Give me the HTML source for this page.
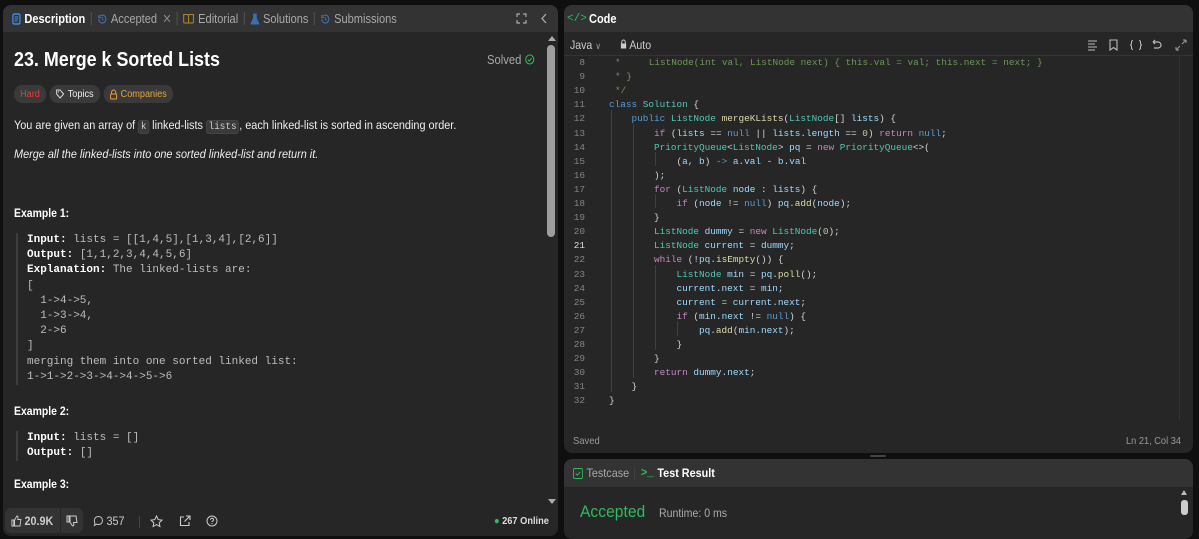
<!DOCTYPE html>
<html><head><meta charset="utf-8"><style>
*{box-sizing:border-box;margin:0;padding:0}
body{width:1199px;height:538px;background:#0f0f0f;overflow:hidden;font-family:"Liberation Sans",sans-serif;color:#eff1f6;position:relative}
.panel{position:absolute;background:#262626;border-radius:8px;overflow:hidden}
.hdr{position:absolute;left:0;right:0;top:0;height:27px;background:#333;display:flex;align-items:center;font-size:12.5px;color:#a8a8a8}
.sep{width:1px;height:13px;background:#555;margin:0 6px}
.tab{display:flex;align-items:center;gap:4px}
.mono{font-family:"Liberation Mono",monospace}
.ln{position:absolute;left:0;width:21px;text-align:right;color:#858585}
.cl{position:absolute;left:45px;white-space:pre;color:#d4d4d4}
.kw{color:#c586c0}.ty{color:#4ec9b0}.va{color:#9cdcfe}.nu{color:#569cd6}.fn{color:#dcdcaa}.cm{color:#6a9955}.num{color:#b5cea8}
.guide{position:absolute;width:1px;background:#404040}
.ex{position:absolute;left:16px;border-left:2px solid #3d3d3d;padding-left:9px;font-family:"Liberation Mono",monospace;font-size:11px;line-height:15.2px;color:#bdbdbd;white-space:pre}
.ex b{color:#fff}
.h4{position:absolute;left:14px;font-weight:bold;font-size:12px;color:#fff;transform:scaleX(.87);transform-origin:0 0}
.sx{transform-origin:0 0;white-space:nowrap}
</style></head><body>

<!-- LEFT PANEL -->
<div class="panel" style="left:3px;top:5px;width:555px;height:531px">
  <div class="hdr" style="padding-left:9px">
    <div class="sx" style="display:flex;align-items:center;transform:scaleX(.885)">
    <div class="tab" style="color:#fff;font-weight:bold"><svg width="10" height="12" viewBox="0 0 10 12"><rect x="1" y="1" width="8" height="10" rx="1.5" fill="none" stroke="#3b8df5" stroke-width="1.4"/><path d="M3 4h4M3 6h4M3 8h3" stroke="#3b8df5" stroke-width="1"/></svg>Description</div>
    <div class="sep"></div>
    <div class="tab"><svg width="12" height="12" viewBox="0 0 12 12"><path d="M2 6a4 4 0 1 0 1.2-2.8" fill="none" stroke="#3b6fb0" stroke-width="1.2"/><path d="M2 2v2.5h2.5" fill="none" stroke="#3b6fb0" stroke-width="1.2"/><path d="M6 4v2.2l1.5 1" stroke="#3b6fb0" stroke-width="1" fill="none"/></svg>Accepted <span style="margin-left:2px;color:#888">✕</span></div>
    <div class="sep"></div>
    <div class="tab"><svg width="13" height="11" viewBox="0 0 13 11"><path d="M1 1.5h4a1.5 1.5 0 0 1 1.5 1.5v7H2a1 1 0 0 1-1-1zM12 1.5H8A1.5 1.5 0 0 0 6.5 3v7H11a1 1 0 0 0 1-1z" fill="none" stroke="#b8862b" stroke-width="1.1"/></svg>Editorial</div>
    <div class="sep"></div>
    <div class="tab"><svg width="11" height="12" viewBox="0 0 11 12"><path d="M3.5 1h4M4 1v4L1 11h9L7 5V1" fill="#3b6fb0" stroke="#3b6fb0" stroke-width="1"/></svg>Solutions</div>
    <div class="sep"></div>
    <div class="tab"><svg width="12" height="12" viewBox="0 0 12 12"><path d="M2 6a4 4 0 1 0 1.2-2.8" fill="none" stroke="#3b6fb0" stroke-width="1.2"/><path d="M2 2v2.5h2.5" fill="none" stroke="#3b6fb0" stroke-width="1.2"/><path d="M6 4v2.2l1.5 1" stroke="#3b6fb0" stroke-width="1" fill="none"/></svg>Submissions</div>
    </div>
    <svg style="position:absolute;left:513px;top:8px" width="11" height="11" viewBox="0 0 11 11"><path d="M1 4V1h3M7 1h3v3M10 7v3H7M4 10H1V7" fill="none" stroke="#aaa" stroke-width="1.2"/></svg>
    <svg style="position:absolute;left:537px;top:8px" width="8" height="11" viewBox="0 0 8 11"><path d="M6 1L2 5.5 6 10" fill="none" stroke="#aaa" stroke-width="1.3"/></svg>
  </div>
  <div class="sx" style="position:absolute;left:11px;top:44px;font-size:20px;font-weight:bold;color:#fff;transform:scaleX(.895)">23. Merge k Sorted Lists</div>
  <div class="sx" style="position:absolute;left:484px;top:48px;font-size:12.5px;color:#a8a8a8;transform:scaleX(.9)">Solved <svg width="11" height="11" viewBox="0 0 11 11" style="vertical-align:-1px"><circle cx="5.5" cy="5.5" r="4.5" fill="none" stroke="#2cbb5d" stroke-width="1.1"/><path d="M3.3 5.6l1.6 1.5 2.8-3" fill="none" stroke="#2cbb5d" stroke-width="1.1"/></svg></div>
  <div class="sx" style="position:absolute;left:11px;top:80px;display:flex;gap:4px;font-size:10.5px;transform:scaleX(.87)">
    <div style="background:#3a3a3a;border-radius:9px;padding:3px 7px;color:#f63636">Hard</div>
    <div style="background:#3a3a3a;border-radius:9px;padding:3px 7px;color:#eee;display:flex;gap:4px;align-items:center"><svg width="10" height="10" viewBox="0 0 10 10"><path d="M1 1h4l4 4-4 4-4-4z" fill="none" stroke="#ddd" stroke-width="1.1"/><circle cx="3" cy="3" r=".7" fill="#ddd"/></svg>Topics</div>
    <div style="background:#3a3a3a;border-radius:9px;padding:3px 7px;color:#e6a33a;display:flex;gap:4px;align-items:center"><svg width="9" height="11" viewBox="0 0 9 11"><path d="M2 5V3.5a2.5 2.5 0 0 1 5 0V5" fill="none" stroke="#e6a33a" stroke-width="1.1"/><rect x="1" y="5" width="7" height="5" rx="1" fill="none" stroke="#e6a33a" stroke-width="1.1"/></svg>Companies</div>
  </div>
  <div class="sx" style="position:absolute;left:11px;top:113px;font-size:12.3px;color:#eee;transform:scaleX(.885)">You are given an array of <span class="mono" style="background:#3a3a3a;border:1px solid #444;border-radius:3px;padding:0 2px;font-size:10.5px;color:#ccc">k</span> linked-lists <span class="mono" style="background:#3a3a3a;border:1px solid #444;border-radius:3px;padding:0 2px;font-size:10.5px;color:#ccc">lists</span>, each linked-list is sorted in ascending order.</div>
  <div class="sx" style="position:absolute;left:11px;top:142px;font-size:12.3px;font-style:italic;color:#eee;transform:scaleX(.885)">Merge all the linked-lists into one sorted linked-list and return it.</div>
  <div class="h4" style="left:11px;top:201px">Example 1:</div>
  <div class="ex" style="left:13px;top:228px"><b>Input:</b> lists = [[1,4,5],[1,3,4],[2,6]]
<b>Output:</b> [1,1,2,3,4,4,5,6]
<b>Explanation:</b> The linked-lists are:
[
  1-&gt;4-&gt;5,
  1-&gt;3-&gt;4,
  2-&gt;6
]
merging them into one sorted linked list:
1-&gt;1-&gt;2-&gt;3-&gt;4-&gt;4-&gt;5-&gt;6</div>
  <div class="h4" style="left:11px;top:399px">Example 2:</div>
  <div class="ex" style="left:13px;top:426px"><b>Input:</b> lists = []
<b>Output:</b> []</div>
  <div class="h4" style="left:11px;top:472px">Example 3:</div>
  <div style="position:absolute;right:0;top:28px;width:13px;height:474px;background:#262626">
    <div style="position:absolute;left:3px;top:3px;width:0;height:0;border:4px solid transparent;border-bottom:5px solid #aaa;border-top:0"></div>
    <div style="position:absolute;left:2px;top:12px;width:8px;height:192px;background:#9e9e9e;border-radius:4px"></div>
    <div style="position:absolute;left:3px;bottom:3px;width:0;height:0;border:4px solid transparent;border-top:5px solid #aaa;border-bottom:0"></div>
  </div>
  <div style="position:absolute;left:0;right:0;bottom:0;height:30px;background:#262626;font-size:12px;color:#ccc">
    <div style="position:absolute;left:2px;top:2px;width:78px;height:25px;background:#333;border-radius:6px"></div>
    <div style="position:absolute;left:57px;top:2px;width:1px;height:25px;background:#262626"></div>
    <div class="sx" style="position:absolute;left:8px;top:8px;display:flex;align-items:center;gap:3px;font-weight:bold;transform:scaleX(.9)"><svg width="12" height="12" viewBox="0 0 12 12"><path d="M1 5h2v6H1zM4 5l2.5-4c1 0 1.5.7 1.3 1.8L7.5 4.5H11l-1 6.5H4z" fill="none" stroke="#ccc" stroke-width="1"/></svg>20.9K</div>
    <svg style="position:absolute;left:63px;top:9px" width="12" height="12" viewBox="0 0 12 12"><path d="M1 1h2v6H1zM4 7l2.5 4c1 0 1.5-.7 1.3-1.8L7.5 7.5H11L10 1H4z" fill="none" stroke="#ccc" stroke-width="1"/></svg>
    <div class="sx" style="position:absolute;left:90px;top:8px;display:flex;align-items:center;gap:3px;transform:scaleX(.9)"><svg width="12" height="12" viewBox="0 0 12 12"><path d="M6 1.5c2.8 0 4.5 1.8 4.5 4s-1.7 4-4.5 4c-.8 0-1.5-.1-2.1-.4L1.5 10.5l.7-2.2C1.7 7.6 1.5 6.7 1.5 5.5c0-2.2 1.7-4 4.5-4z" fill="none" stroke="#ccc" stroke-width="1"/></svg>357</div>
    <div style="position:absolute;left:136px;top:10px;width:1px;height:12px;background:#444"></div>
    <svg style="position:absolute;left:147px;top:9px" width="13" height="13" viewBox="0 0 13 13"><path d="M6.5 1l1.7 3.6 3.8.5-2.8 2.6.7 3.8-3.4-1.9-3.4 1.9.7-3.8L1 5.1l3.8-.5z" fill="none" stroke="#ccc" stroke-width="1"/></svg>
    <svg style="position:absolute;left:176px;top:9px" width="12" height="12" viewBox="0 0 12 12"><path d="M5 2H1.5v8.5H10V7M7 1h4v4M11 1L5.5 6.5" fill="none" stroke="#ccc" stroke-width="1.1"/></svg>
    <svg style="position:absolute;left:203px;top:9px" width="12" height="12" viewBox="0 0 12 12"><circle cx="6" cy="6" r="5" fill="none" stroke="#ccc" stroke-width="1"/><path d="M4.5 4.7a1.5 1.5 0 1 1 2 1.4c-.4.2-.5.5-.5.9" fill="none" stroke="#ccc" stroke-width="1"/><circle cx="6" cy="8.6" r=".6" fill="#ccc"/></svg>
    <div class="sx" style="position:absolute;left:491px;top:9px;font-size:10.5px;color:#ddd;font-weight:bold;transform:scaleX(.88)"><span style="color:#2cbb5d">●</span> 267 Online</div>
  </div>
</div>

<!-- CODE PANEL -->
<div class="panel" style="left:564px;top:5px;width:629px;height:448px">
  <div class="hdr" style="padding-left:3px;font-weight:bold;color:#fff"><span style="color:#2cbb5d;font-weight:normal;margin-right:2px;font-size:11px" class="mono">&lt;/&gt;</span><span class="sx" style="display:inline-block;transform:scaleX(.88)">Code</span></div>
  <div style="position:absolute;left:0;right:0;top:28px;height:23px;border-bottom:1px solid #333;font-size:12px;color:#ccc">
    <div class="sx" style="position:absolute;left:6px;top:5px;transform:scaleX(.88)">Java <span style="font-size:9px;color:#999">∨</span></div>
    <div class="sx" style="position:absolute;left:56px;top:5px;transform:scaleX(.88)"><svg width="8" height="10" viewBox="0 0 8 10"><path d="M2 4.5V3a2 2 0 0 1 4 0v1.5" fill="none" stroke="#ccc" stroke-width="1.1"/><rect x="1" y="4.5" width="6" height="5" fill="#ccc"/></svg> Auto</div>
    <svg style="position:absolute;left:523px;top:6px" width="104" height="12" viewBox="0 0 104 12">
      <path d="M1 2h9M1 5h7M1 8h9M1 11h7" stroke="#bbb" stroke-width="1.1"/>
      <path d="M23 1h7v10l-3.5-2.5L23 11z" fill="none" stroke="#bbb" stroke-width="1.1"/>
      <path d="M46 1.5c-1.5 0-1.5 1-1.5 2.5s-1 2-1.5 2c.5 0 1.5.5 1.5 2s0 2.5 1.5 2.5M52 1.5c1.5 0 1.5 1 1.5 2.5s1 2 1.5 2c-.5 0-1.5.5-1.5 2s0 2.5-1.5 2.5" fill="none" stroke="#bbb" stroke-width="1.1"/>
      <path d="M66 3h5a3 3 0 0 1 0 6h-4M66 3l2-2M66 3l2 2" fill="none" stroke="#bbb" stroke-width="1.2"/>
      <path d="M89 11l4-4M89 11V8M89 11h3M99 1l-4 4M99 1v3M99 1h-3" fill="none" stroke="#999" stroke-width="1"/>
    </svg>
  </div>
  <div class="mono" style="position:absolute;left:0;top:51px;width:617px;height:365px;font-size:9.4px">
    <div style="position:absolute;right:1px;top:0;width:1px;height:365px;background:#333"></div>
    <div class="guide" style="left:47px;top:54px;height:282px"></div>
    <div class="guide" style="left:69px;top:68px;height:254px"></div>
    <div class="guide" style="left:91px;top:96px;height:14px"></div>
    <div class="guide" style="left:91px;top:138px;height:14px"></div>
    <div class="guide" style="left:91px;top:209px;height:85px"></div>
    <div class="guide" style="left:113px;top:265px;height:15px"></div>
    <div id="code"></div>
  </div>
  <div class="sx" style="position:absolute;left:9px;top:430px;font-size:10.5px;color:#999;transform:scaleX(.9)">Saved</div>
  <div class="sx" style="position:absolute;left:562px;top:430px;font-size:10.5px;color:#999;transform:scaleX(.88)">Ln 21, Col 34</div>
</div>
<div style="position:absolute;left:870px;top:455px;width:16px;height:2px;background:#444;border-radius:1px"></div>

<!-- TEST PANEL -->
<div class="panel" style="left:564px;top:459px;width:629px;height:80px">
  <div class="hdr" style="height:28px;padding-left:9px;font-size:12px">
    <div class="sx" style="display:flex;align-items:center;transform:scaleX(.9)">
    <svg width="11" height="11" viewBox="0 0 11 11"><rect x=".5" y=".5" width="10" height="10" rx="1.5" fill="none" stroke="#2cbb5d" stroke-width="1"/><path d="M3 5.5l1.8 1.7L8 4" fill="none" stroke="#2cbb5d" stroke-width="1"/></svg>
    <span style="margin-left:4px">Testcase</span><div class="sep" style="background:#444"></div>
    <span style="color:#2cbb5d;font-family:'Liberation Mono',monospace;font-size:12px;font-weight:bold">&gt;_</span>
    <span style="margin-left:4px;color:#fff;font-weight:bold">Test Result</span>
    </div>
  </div>
  <div class="sx" style="position:absolute;left:16px;top:43px;font-size:17px;color:#2cbb5d;transform:scaleX(.92)">Accepted</div>
  <div class="sx" style="position:absolute;left:95px;top:47px;font-size:12px;color:#aaa;transform:scaleX(.88)">Runtime: 0 ms</div>
  <div style="position:absolute;right:5px;top:31px;width:7px;height:46px">
    <div style="width:0;height:0;border:3.5px solid transparent;border-bottom:5px solid #bbb;border-top:0"></div>
    <div style="margin-top:5px;width:7px;height:15px;background:#ccc;border-radius:3px"></div>
  </div>
</div>

<script>
const lines=[
[8,'<span class="cm">*     ListNode(int val, ListNode next) { this.val = val; this.next = next; }</span>',1],
[9,'<span class="cm">* }</span>',1],
[10,'<span class="cm">*/</span>',1],
[11,'<span class="nu">class</span> <span class="ty">Solution</span> {',0],
[12,'    <span class="nu">public</span> <span class="ty">ListNode</span> <span class="fn">mergeKLists</span>(<span class="ty">ListNode</span>[] <span class="va">lists</span>) {',0],
[13,'        <span class="kw">if</span> (<span class="va">lists</span> == <span class="nu">null</span> || <span class="va">lists</span>.<span class="va">length</span> == <span class="num">0</span>) <span class="kw">return</span> <span class="nu">null</span>;',0],
[14,'        <span class="ty">PriorityQueue</span>&lt;<span class="ty">ListNode</span>&gt; <span class="va">pq</span> = <span class="kw">new</span> <span class="ty">PriorityQueue</span>&lt;&gt;(',0],
[15,'            (<span class="va">a</span>, <span class="va">b</span>) <span class="nu">-&gt;</span> <span class="va">a</span>.<span class="va">val</span> - <span class="va">b</span>.<span class="va">val</span>',0],
[16,'        );',0],
[17,'        <span class="kw">for</span> (<span class="ty">ListNode</span> <span class="va">node</span> : <span class="va">lists</span>) {',0],
[18,'            <span class="kw">if</span> (<span class="va">node</span> != <span class="nu">null</span>) <span class="va">pq</span>.<span class="fn">add</span>(<span class="va">node</span>);',0],
[19,'        }',0],
[20,'        <span class="ty">ListNode</span> <span class="va">dummy</span> = <span class="kw">new</span> <span class="ty">ListNode</span>(<span class="num">0</span>);',0],
[21,'        <span class="ty">ListNode</span> <span class="va">current</span> = <span class="va">dummy</span>;',0],
[22,'        <span class="kw">while</span> (!<span class="va">pq</span>.<span class="fn">isEmpty</span>()) {',0],
[23,'            <span class="ty">ListNode</span> <span class="va">min</span> = <span class="va">pq</span>.<span class="fn">poll</span>();',0],
[24,'            <span class="va">current</span>.<span class="va">next</span> = <span class="va">min</span>;',0],
[25,'            <span class="va">current</span> = <span class="va">current</span>.<span class="va">next</span>;',0],
[26,'            <span class="kw">if</span> (<span class="va">min</span>.<span class="va">next</span> != <span class="nu">null</span>) {',0],
[27,'                <span class="va">pq</span>.<span class="fn">add</span>(<span class="va">min</span>.<span class="va">next</span>);',0],
[28,'            }',0],
[29,'        }',0],
[30,'        <span class="kw">return</span> <span class="va">dummy</span>.<span class="va">next</span>;',0],
[31,'    }',0],
[32,'}',0]];
let h='';
lines.forEach((l,i)=>{const y=1+i*14.1;
h+=`<div class="ln" style="top:${y}px;${l[0]==21?'color:#ddd':''}">${l[0]}</div><div class="cl" style="top:${y}px;${l[2]?'left:51px':''}">${l[1]}</div>`;});
document.getElementById('code').innerHTML=h;
</script>
</body></html>
